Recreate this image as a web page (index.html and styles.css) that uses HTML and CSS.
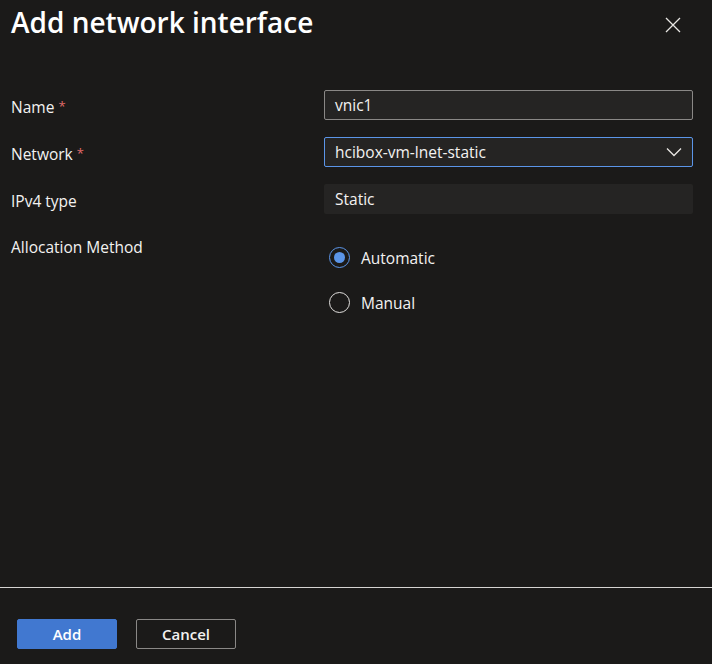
FILE: index.html
```html
<!DOCTYPE html>
<html>
<head>
<meta charset="utf-8">
<link rel="stylesheet" href="styles.css">
</head>
<body>
<div class="panel">
  <header class="header">
    <h1 class="title">Add network interface</h1>
    <button class="close" aria-label="Close">
      <svg width="16" height="16" viewBox="0 0 16 16"><path d="M1 1 L15 15 M15 1 L1 15" stroke="#e8e6e3" stroke-width="1.3" fill="none"/></svg>
    </button>
  </header>
  <main class="form">
    <div class="row">
      <label class="label">Name <span class="req">*</span></label>
      <div class="input">vnic1</div>
    </div>
    <div class="row">
      <label class="label">Network <span class="req">*</span></label>
      <div class="input select">
        <span>hcibox-vm-lnet-static</span>
        <svg class="chev" width="16" height="10" viewBox="0 0 16 10"><path d="M1 1.5 L8 8.5 L15 1.5" stroke="#e8e6e3" stroke-width="1.3" fill="none"/></svg>
      </div>
    </div>
    <div class="row">
      <label class="label">IPv4 type</label>
      <div class="input readonly">Static</div>
    </div>
    <div class="row alloc">
      <label class="label">Allocation Method</label>
      <div class="radios">
        <div class="radio"><span class="circle checked"></span><span>Automatic</span></div>
        <div class="radio"><span class="circle"></span><span>Manual</span></div>
      </div>
    </div>
  </main>
  <footer class="footer">
    <button class="btn primary">Add</button>
    <button class="btn secondary">Cancel</button>
  </footer>
</div>
</body>
</html>
```
FILE: styles.css
```css
* { box-sizing: border-box; }
html, body { margin: 0; padding: 0; }
body {
  background: #1b1a19;
  color: #f3f2f1;
  font-family: "Open Sans", "Noto Sans", sans-serif;
  width: 712px;
  height: 664px;
  overflow: hidden;
}
.panel {
  height: 664px;
  display: flex;
  flex-direction: column;
}
.header {
  display: flex;
  justify-content: space-between;
  align-items: flex-start;
  padding: 2px 31px 0 11px;
}
.title {
  margin: 0;
  font-size: 28px;
  font-weight: 600;
  line-height: 40px;
  color: #ffffff;
  letter-spacing: 0;
}
.close {
  background: none;
  border: none;
  padding: 0;
  margin-top: 15px;
  width: 16px;
  height: 16px;
  display: flex;
}
.form {
  flex: 1;
  padding: 48px 20px 0 11px;
  display: flex;
  flex-direction: column;
  gap: 17px;
}
.row {
  display: grid;
  grid-template-columns: 313px 369px;
  align-items: center;
}
.label {
  font-size: 15.5px;
  color: #f3f2f1;
  padding-top: 3px;
}
.req {
  color: #e06a6a;
  font-size: 13px;
  vertical-align: 2px;
}
.input {
  height: 30px;
  border: 1px solid #8a8886;
  background: #252423;
  border-radius: 2px;
  padding: 0 10px;
  font-size: 15.5px;
  display: flex;
  align-items: center;
  color: #f3f2f1;
}
.select {
  border-color: #5b95e8;
  justify-content: space-between;
  padding-right: 10px;
}
.readonly {
  border-color: transparent;
  background: #252423;
  padding-left: 10px;
}
.alloc {
  align-items: start;
}
.alloc .label { padding-top: 5px; }
.radios {
  display: flex;
  flex-direction: column;
  gap: 24px;
  padding-top: 16px;
  padding-left: 5px;
}
.radio {
  display: flex;
  align-items: center;
  gap: 11px;
  font-size: 15.5px;
  height: 21px;
}
.circle {
  width: 21px;
  height: 21px;
  border-radius: 50%;
  border: 1px solid #e1dfdd;
  display: inline-flex;
  align-items: center;
  justify-content: center;
}
.circle.checked {
  border-color: #5b95e8;
}
.circle.checked::after {
  content: "";
  width: 11px;
  height: 11px;
  border-radius: 50%;
  background: #5b95e8;
}
.footer {
  border-top: 1px solid #d6d4d2;
  padding: 31px 17px 15px;
  display: flex;
  gap: 19px;
  height: 77px;
}
.btn {
  width: 100px;
  height: 30px;
  border-radius: 2px;
  font-family: inherit;
  font-size: 15px;
  font-weight: 600;
  cursor: pointer;
}
.primary {
  background: #4178d0;
  border: 1px solid #4178d0;
  color: #ffffff;
}
.secondary {
  background: #1b1a19;
  border: 1px solid #8a8886;
  color: #f3f2f1;
}
```
